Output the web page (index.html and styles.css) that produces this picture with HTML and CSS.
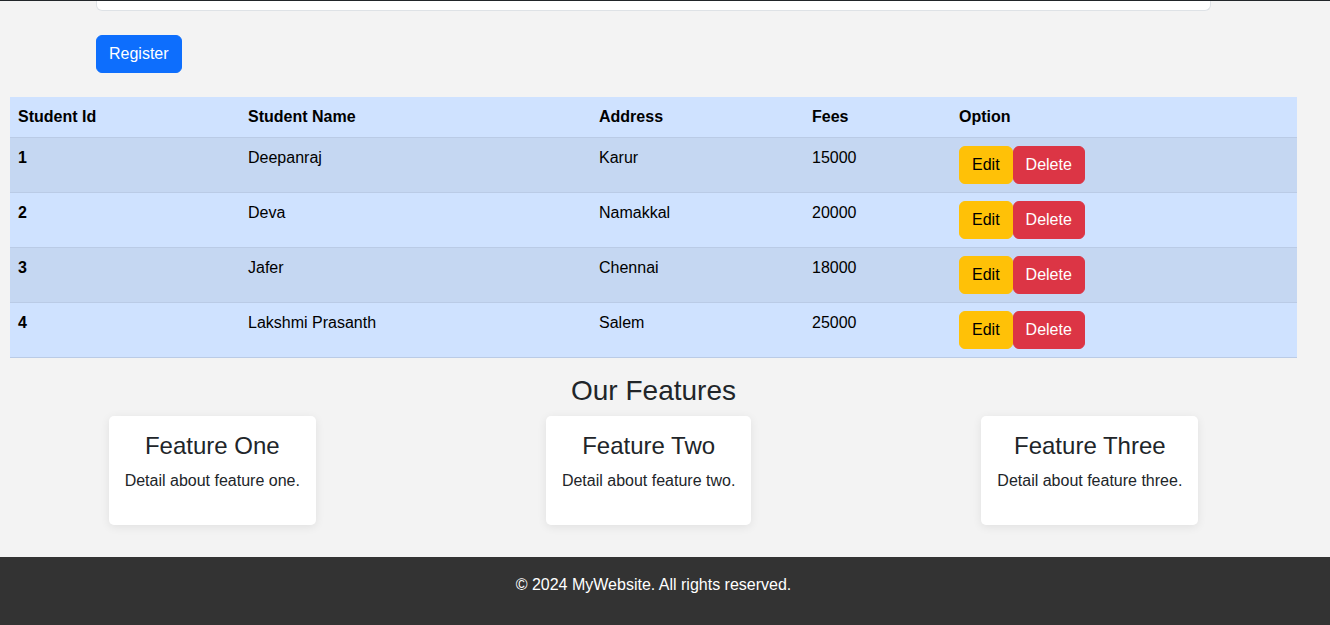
FILE: index.html
```html
<!DOCTYPE html>
<html lang="en">
<head>
<meta charset="utf-8">
<title>Students</title>
<link rel="stylesheet" href="styles.css">
</head>
<body>
<div class="topbar"></div>
<div class="page">
  <div class="form-area">
    <div class="form-card"></div>
    <button class="btn btn-primary">Register</button>
  </div>
  <div class="table-wrap">
    <table class="students">
      <thead>
        <tr>
          <th class="c-id">Student Id</th>
          <th class="c-name">Student Name</th>
          <th class="c-addr">Address</th>
          <th class="c-fees">Fees</th>
          <th>Option</th>
        </tr>
      </thead>
      <tbody>
        <tr>
          <th>1</th><td>Deepanraj</td><td>Karur</td><td>15000</td>
          <td><div class="actions"><button class="btn btn-warning">Edit</button><button class="btn btn-danger">Delete</button></div></td>
        </tr>
        <tr>
          <th>2</th><td>Deva</td><td>Namakkal</td><td>20000</td>
          <td><div class="actions"><button class="btn btn-warning">Edit</button><button class="btn btn-danger">Delete</button></div></td>
        </tr>
        <tr>
          <th>3</th><td>Jafer</td><td>Chennai</td><td>18000</td>
          <td><div class="actions"><button class="btn btn-warning">Edit</button><button class="btn btn-danger">Delete</button></div></td>
        </tr>
        <tr>
          <th>4</th><td>Lakshmi Prasanth</td><td>Salem</td><td>25000</td>
          <td><div class="actions"><button class="btn btn-warning">Edit</button><button class="btn btn-danger">Delete</button></div></td>
        </tr>
      </tbody>
    </table>
  </div>
  <section class="features">
    <h2>Our Features</h2>
    <div class="feature-list">
      <div class="feature">
        <h3>Feature One</h3>
        <p>Detail about feature one.</p>
      </div>
      <div class="feature">
        <h3>Feature Two</h3>
        <p>Detail about feature two.</p>
      </div>
      <div class="feature">
        <h3>Feature Three</h3>
        <p>Detail about feature three.</p>
      </div>
    </div>
  </section>
</div>
<footer class="footer">
  <p>&copy; 2024 MyWebsite. All rights reserved.</p>
</footer>
</body>
</html>
```

FILE: styles.css
```css
* { box-sizing: border-box; }

html, body {
  margin: 0;
  padding: 0;
}

body {
  background: #f3f3f3;
  color: #212529;
  font-family: "Liberation Sans", Arial, sans-serif;
  font-size: 16px;
  line-height: 24px;
}

.topbar {
  height: 1px;
  background: #212529;
}

.page {
  width: 1307px;
}

.form-area {
  padding: 0 0 0 96px;
}

.form-card {
  width: 1115px;
  height: 10px;
  background: #fff;
  border: 1px solid #dee2e6;
  border-top: none;
  border-radius: 0 0 6px 6px;
  margin-bottom: 24px;
}

.btn {
  display: inline-block;
  font-family: inherit;
  font-size: 16px;
  line-height: 24px;
  padding: 6px 12px;
  border: 1px solid transparent;
  border-radius: 6px;
  cursor: pointer;
}

.btn-primary {
  background: #0d6efd;
  border-color: #0d6efd;
  color: #fff;
}

.btn-warning {
  background: #ffc107;
  border-color: #ffc107;
  color: #000;
}

.btn-danger {
  background: #dc3545;
  border-color: #dc3545;
  color: #fff;
}

.table-wrap {
  padding: 24px 10px 0 10px;
}

.students {
  width: 1287px;
  border-collapse: collapse;
  margin-bottom: 16px;
  color: #000;
  background: #cfe2ff;
}

.students th,
.students td {
  text-align: left;
  vertical-align: top;
  padding: 8px;
  border-bottom: 1px solid #bacbe6;
}

.students th { font-weight: bold; }
.students td { font-weight: normal; }

.c-id { width: 230px; }
.c-name { width: 351px; }
.c-addr { width: 213px; }
.c-fees { width: 147px; }

.students tbody tr:nth-child(odd) {
  background: #c5d7f2;
}

.actions {
  display: flex;
}

.features {
  text-align: center;
}

.features h2 {
  margin: 0 0 8px;
  font-size: 28px;
  line-height: 34px;
  font-weight: normal;
  color: #212529;
}

.feature-list {
  display: flex;
  justify-content: center;
  align-items: flex-start;
  gap: 230px;
}

.feature {
  background: #fff;
  border-radius: 5px;
  padding: 16px;
  box-shadow: 0 2px 10px rgba(0, 0, 0, 0.08);
}

.feature h3 {
  margin: 0 0 9px;
  font-size: 24px;
  line-height: 28px;
  font-weight: normal;
}

.feature p {
  margin: 0 0 16px;
}

.footer {
  margin-top: 32px;
  background: #333;
  color: #fff;
  text-align: center;
  padding: 16px 23px 40px 0;
}

.footer p {
  margin: 0;
}
```
